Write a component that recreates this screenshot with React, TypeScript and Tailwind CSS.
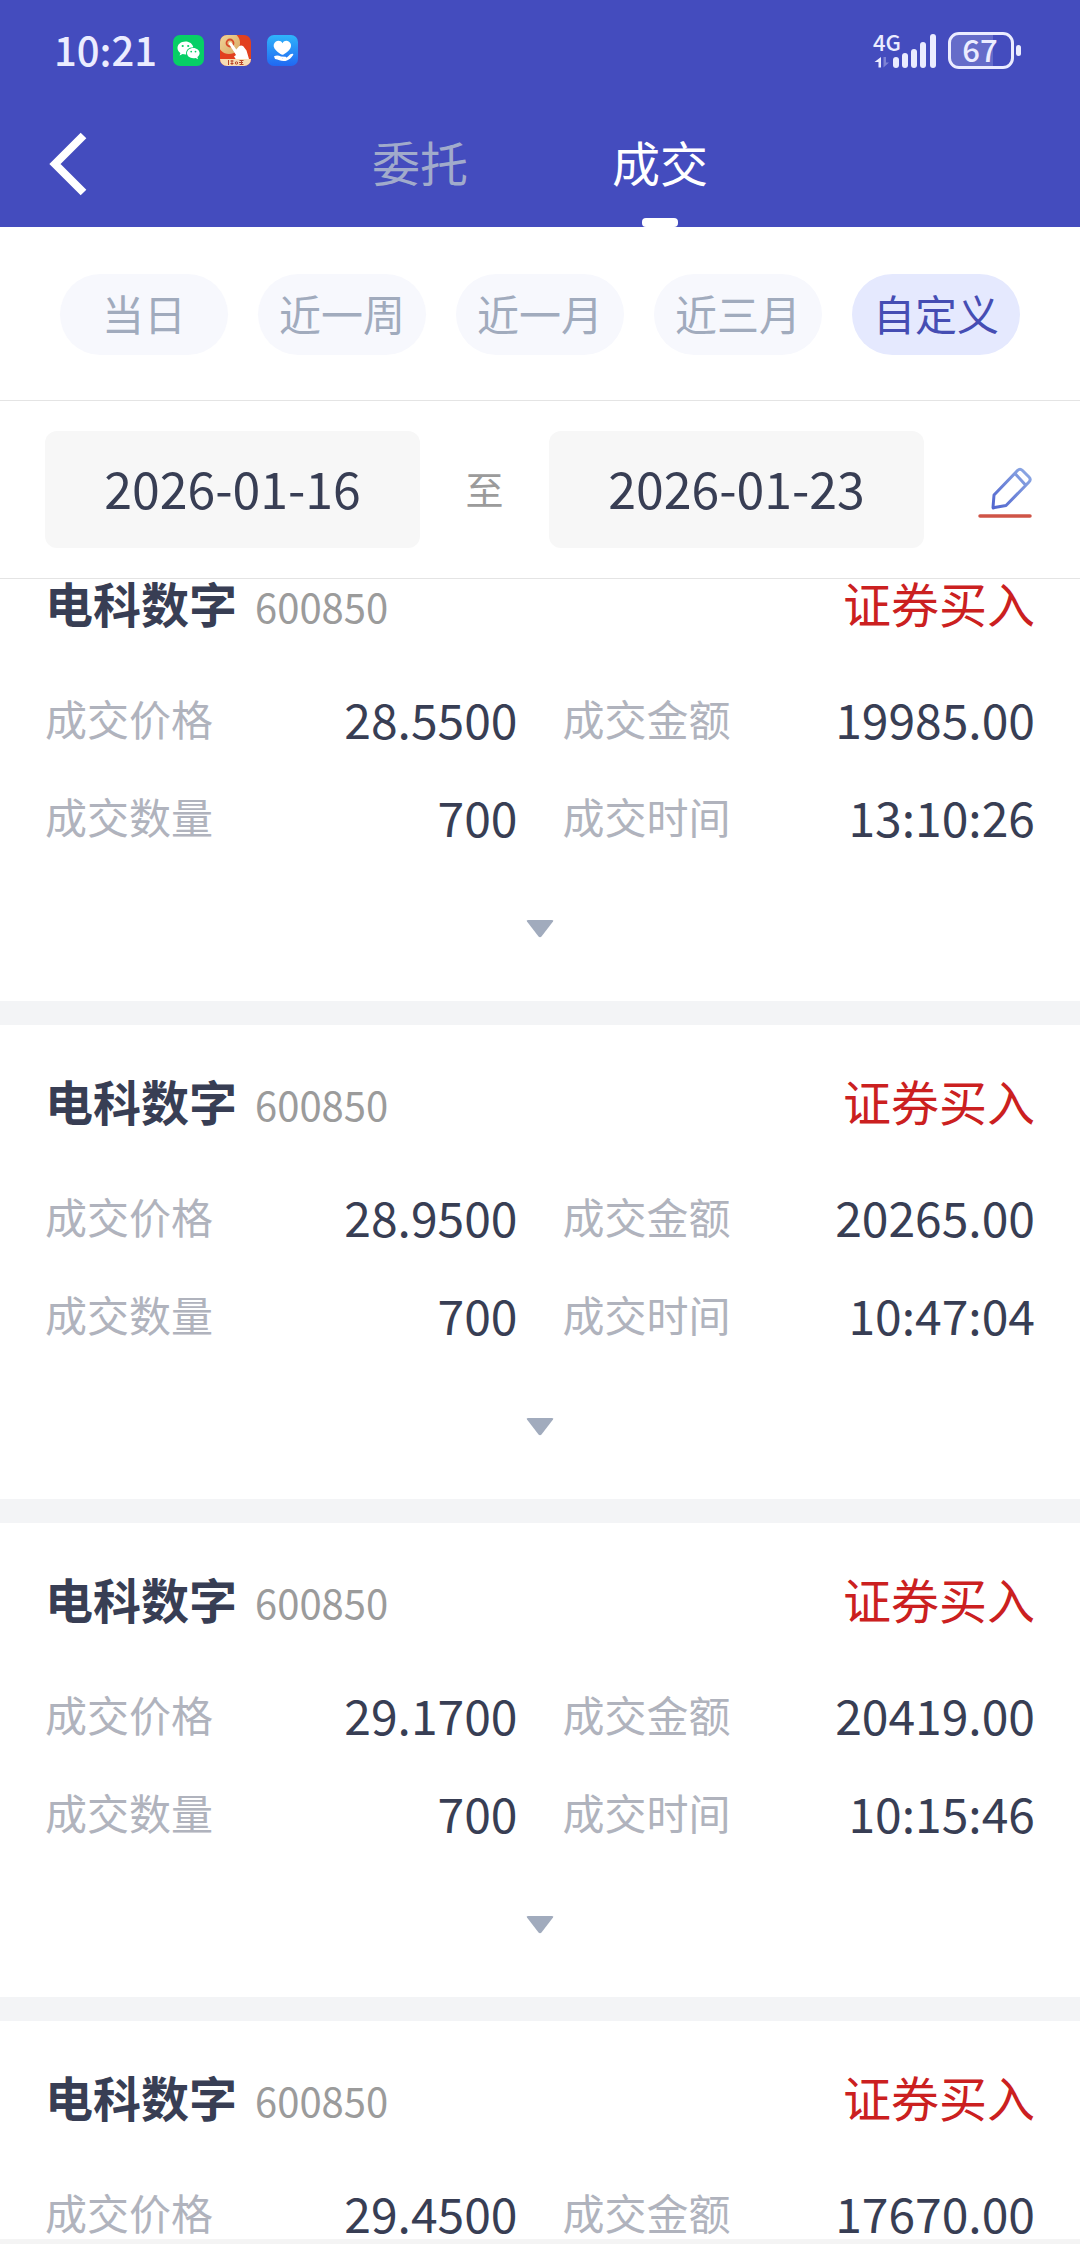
import { useState } from "react";
import clsx from "clsx";

type Deal = {
  id: number;
  name: string;
  code: string;
  side: string;
  price: string;
  amount: string;
  volume: string;
  time: string;
};

const TABS = ["委托", "成交"];
const RANGES = ["当日", "近一周", "近一月", "近三月", "自定义"];

const DEALS: Deal[] = [
  { id: 1, name: "电科数字", code: "600850", side: "证券买入", price: "28.5500", amount: "19985.00", volume: "700", time: "13:10:26" },
  { id: 2, name: "电科数字", code: "600850", side: "证券买入", price: "28.9500", amount: "20265.00", volume: "700", time: "10:47:04" },
  { id: 3, name: "电科数字", code: "600850", side: "证券买入", price: "29.1700", amount: "20419.00", volume: "700", time: "10:15:46" },
  { id: 4, name: "电科数字", code: "600850", side: "证券买入", price: "29.4500", amount: "17670.00", volume: "600", time: "09:48:12" },
];

function WeChatIcon() {
  return (
    <svg className="size-[31px]" viewBox="0 0 31 31" aria-hidden="true">
      <rect width="31" height="31" rx="7" fill="#07cf66" />
      <path d="M12.5 6.5c-4.6 0-8 2.9-8 6.5 0 2 1.1 3.8 2.9 5l-.8 2.6 3-1.5c.9.3 1.9.4 2.900.4h.7c-.8-4 2.400-7.200 7.100-7.200-.6-3.400-3.900-5.800-7.800-5.800z" fill="#fff" />
      <path d="M20.300 12.900c-3.600 0-6.300 2.300-6.300 5.200s2.700 5.200 6.300 5.200c.8 0 1.600-.1 2.300-.3l2.400 1.300-.6-2.200c1.400-1 2.200-2.400 2.200-4 0-2.900-2.800-5.200-6.300-5.200z" fill="#fff" />
      <circle cx="9.700" cy="11" r="1.100" fill="#07cf66" />
      <circle cx="15.200" cy="11" r="1.100" fill="#07cf66" />
      <circle cx="18.200" cy="16.600" r=".9" fill="#07cf66" />
      <circle cx="22.500" cy="16.600" r=".9" fill="#07cf66" />
    </svg>
  );
}

function BrokerIcon() {
  return (
    <svg className="size-[31px]" viewBox="0 0 31 31" aria-hidden="true">
      <defs>
        <clipPath id="broker-clip">
          <rect width="31" height="31" rx="7" />
        </clipPath>
        <linearGradient id="broker-gold" x1="0" y1="0" x2="1" y2="1">
          <stop offset="0" stopColor="#f3d9a0" />
          <stop offset="1" stopColor="#d9a962" />
        </linearGradient>
      </defs>
      <g clipPath="url(#broker-clip)">
        <rect width="31" height="31" fill="#e2401f" />
        <circle cx="9" cy="8" r="11" fill="url(#broker-gold)" />
        <circle cx="10" cy="8" r="3.500" fill="none" stroke="#d8492a" strokeWidth="1.800" />
        <path d="M9.500 7.500c.9-.7 1.800-.3 2.300.5l4.500 6.500 3-3.500c1.300-1 3-.6 4 .3l3.200 4.200L29 24v2H17l-3-4.500 2-1.500-6.700-10.600c-.4-.8-.3-1.500.2-1.900z" fill="#fff" />
        <rect y="24" width="31" height="7" fill="#f7dcb4" />
        <path d="M8.500 25v5M10.500 26h3M12 25v5M10.500 28.500h3M19.500 25.500h4M21.500 25v5M19.500 29.500h4M19 27.500h4" stroke="#b8462a" strokeWidth="1" />
        <circle cx="16.500" cy="28" r="1.200" fill="none" stroke="#b8462a" strokeWidth="1" />
      </g>
    </svg>
  );
}

function HealthIcon() {
  return (
    <svg className="size-[31px]" viewBox="0 0 31 31" aria-hidden="true">
      <defs>
        <linearGradient id="health-bg" x1="0" y1="0" x2="0" y2="1">
          <stop offset="0" stopColor="#2fb4fb" />
          <stop offset="1" stopColor="#2168f2" />
        </linearGradient>
      </defs>
      <rect width="31" height="31" rx="7" fill="url(#health-bg)" />
      <path d="M15.500 8.200c1.300-2.400 4-2.900 6.200-1.700 2.600 1.500 3 4.700 1.400 7.200-1.700 2.500-4 4.200-6.600 5.800-1 .5-2 .2-3-.5-2.400-1.500-4.500-3.200-6-5.500-1.500-2.500-1-5.500 1.400-7 2.300-1.300 5.200-.7 6.600 1.700z" fill="#fff" />
      <path d="M7 21.300c2.500-1.200 5-.8 7 .2l4.500.2c1 .1 1 1.500 0 1.600l-4 .3c4 .3 6.500-1.500 8.500-4 1.500-1.300 3.500-1.100 3.300.1-1.800 3-4.300 5.300-7.800 6.200-4.300.9-6.500-1.500-10.500-1.900z" fill="#fff" />
    </svg>
  );
}

function SignalIcon() {
  return (
    <svg className="h-9 w-[64px] overflow-visible" viewBox="0 0 64 36" fill="#ebecff" aria-hidden="true">
      <text x="0" y="18" fontSize="22" fontWeight="500" fontFamily="'Noto Sans CJK SC', sans-serif">4G</text>
      <path d="M8 24v10.500H5.500V29H1.500z" />
      <path d="M10.500 24v10.500L16 29.500H13V24z" opacity=".35" />
      <rect x="20" y="24" width="6" height="11" rx="3" />
      <rect x="29" y="20" width="6" height="15" rx="3" />
      <rect x="38" y="16" width="6" height="19" rx="3" />
      <rect x="47" y="9" width="6" height="26" rx="3" />
      <rect x="57" y="1" width="6" height="34" rx="3" />
    </svg>
  );
}

function BatteryIcon() {
  return (
    <svg className="h-[37px] w-[74px] overflow-visible" viewBox="0 0 74 37" aria-hidden="true">
      <path d="M11 3h34v31H11a8 8 0 0 1-8-8V11a8 8 0 0 1 8-8z" fill="#fff" opacity=".18" />
      <rect x="1.500" y="1.500" width="63" height="34" rx="9.500" fill="none" stroke="#ebecff" strokeWidth="3" />
      <rect x="68" y="13" width="5" height="11" rx="2.500" fill="#ebecff" />
      <text x="32" y="30" textAnchor="middle" fontSize="31" fontWeight="500" fill="#ebecff" fontFamily="'Noto Sans CJK SC', sans-serif">67</text>
    </svg>
  );
}

function EditIcon() {
  return (
    <svg className="h-[52px] w-[54px]" viewBox="0 0 54 52" fill="none" aria-hidden="true">
      <defs>
        <linearGradient id="pen" x1="1" y1="0" x2="0" y2="1">
          <stop offset="0" stopColor="#8fabe4" />
          <stop offset="1" stopColor="#5266cf" />
        </linearGradient>
      </defs>
      <path
        d="M15 40.500 16 28 39.500 3.500Q42 1 44.500 3.500L51 10Q53.500 12.500 51 15L28 38.500 16.500 40.500Q15 41.500 15 40.500ZM37 6.500 47.500 18"
        stroke="url(#pen)"
        strokeWidth="3"
        strokeLinejoin="round"
      />
      <path d="M2 49h50" stroke="#cf5447" strokeWidth="3.500" strokeLinecap="round" />
    </svg>
  );
}

function Field({ label, value }: { label: string; value: string }) {
  return (
    <div className="flex h-[98px] items-center justify-between">
      <dt className="text-[42px] leading-none text-[#b0b3bd]">{label}</dt>
      <dd className="text-5xl leading-none text-[#383e54]">{value}</dd>
    </div>
  );
}

function DealCard({ deal }: { deal: Deal }) {
  return (
    <article className="bg-white px-[45px] pt-[51px] pb-2">
      <div className="mb-[43px] flex h-12 items-baseline justify-between">
        <h2 className="flex items-baseline gap-[18px] text-5xl leading-none font-bold text-[#383e54]">
          {deal.name}
          <span className="text-[40px] font-normal text-[#9b9b9b]">{deal.code}</span>
        </h2>
        <span className="text-5xl leading-none text-[#cb2020]">{deal.side}</span>
      </div>
      <dl className="grid grid-cols-2 gap-x-[45px]">
        <Field label="成交价格" value={deal.price} />
        <Field label="成交金额" value={deal.amount} />
        <Field label="成交数量" value={deal.volume} />
        <Field label="成交时间" value={deal.time} />
      </dl>
      <button type="button" aria-label="展开" className="flex h-32 w-full items-center justify-center">
        <svg className="h-[18px] w-7" viewBox="0 0 28 18" aria-hidden="true">
          <path d="M2 0h24q2 0 1 1.500L15.500 16.500Q14 18 12.500 16.500L1 1.500Q0 0 2 0z" fill="#a1abbd" />
        </svg>
      </button>
    </article>
  );
}

export default function App() {
  const [tab, setTab] = useState("成交");
  const [range, setRange] = useState("自定义");
  const [start, setStart] = useState("2026-01-16");
  const [end, setEnd] = useState("2026-01-23");

  return (
    <div className="flex h-screen flex-col bg-white font-['Noto_Sans_CJK_SC','Noto_Sans',sans-serif]">
      <header className="relative z-10 shrink-0 bg-[#444cbe]">
        {/* Status bar */}
        <div className="flex h-[101px] items-center justify-between pr-[58px] pl-[54px] text-[#ebecff]">
          <div className="flex items-center gap-4">
            <span className="pb-1 text-[40px] leading-none font-medium">10:21</span>
            <WeChatIcon />
            <BrokerIcon />
            <HealthIcon />
          </div>
          <div className="flex items-center gap-[11px]">
            <SignalIcon />
            <BatteryIcon />
          </div>
        </div>

        {/* Nav */}
        <div className="grid h-[126px] grid-cols-[1fr_480px_1fr]">
          <button type="button" aria-label="返回" className="flex items-center pl-12">
            <svg className="h-16 w-10" viewBox="0 0 40 64" fill="none" aria-hidden="true">
              <path d="M35.500 3.500 7 32l28.500 28.500" stroke="#fff" strokeWidth="8" />
            </svg>
          </button>
          <nav className="grid grid-cols-2">
            {TABS.map((t) => (
              <button
                key={t}
                type="button"
                onClick={() => setTab(t)}
                className={clsx(
                  "relative pb-1.5 text-5xl",
                  tab === t ? "text-white" : "text-[#a1abcb]"
                )}
              >
                {t}
                {tab === t && (
                  <span className="absolute bottom-0 left-1/2 h-[9px] w-9 -translate-x-1/2 rounded bg-white" />
                )}
              </button>
            ))}
          </nav>
        </div>
      </header>

      <section className="relative z-10 shrink-0 bg-white">
        <div className="flex gap-[30px] border-b border-[#e4e4e4] px-[60px] pt-[47px] pb-[45px]">
          {RANGES.map((r) => (
            <button
              key={r}
              type="button"
              onClick={() => setRange(r)}
              className={clsx(
                "h-[81px] flex-1 rounded-full pb-1 text-[42px] leading-none whitespace-nowrap",
                range === r ? "bg-[#e5e9fe] text-[#454db3]" : "bg-[#f7f8fd] text-[#a1abbd]"
              )}
            >
              {r}
            </button>
          ))}
        </div>

        <div className="flex items-center border-b border-[#e4e4e4] py-[30px] pr-12 pl-[45px]">
          <input
            aria-label="开始日期"
            value={start}
            onChange={(e) => setStart(e.target.value)}
            className="h-[117px] w-0 flex-1 rounded-xl bg-[#f7f7f7] pb-1.5 text-center text-[50px] text-[#383e54]"
          />
          <span className="w-[129px] pb-1 text-center text-[38px] text-[#9b9b9b]">至</span>
          <input
            aria-label="结束日期"
            value={end}
            onChange={(e) => setEnd(e.target.value)}
            className="h-[117px] w-0 flex-1 rounded-xl bg-[#f7f7f7] pb-1.5 text-center text-[50px] text-[#383e54]"
          />
          <button type="button" aria-label="编辑" className="ml-[54px] pt-1.5">
            <EditIcon />
          </button>
        </div>
      </section>

      <main className="min-h-0 flex-1 overflow-y-auto bg-[#f3f4f6] [scrollbar-width:none]">
        <div className="-mt-[52px] flex flex-col gap-6">
          {DEALS.map((deal) => (
            <DealCard key={deal.id} deal={deal} />
          ))}
        </div>
      </main>
      <footer className="h-[5px] shrink-0 bg-[#f4f4f4]" />
    </div>
  );
}
